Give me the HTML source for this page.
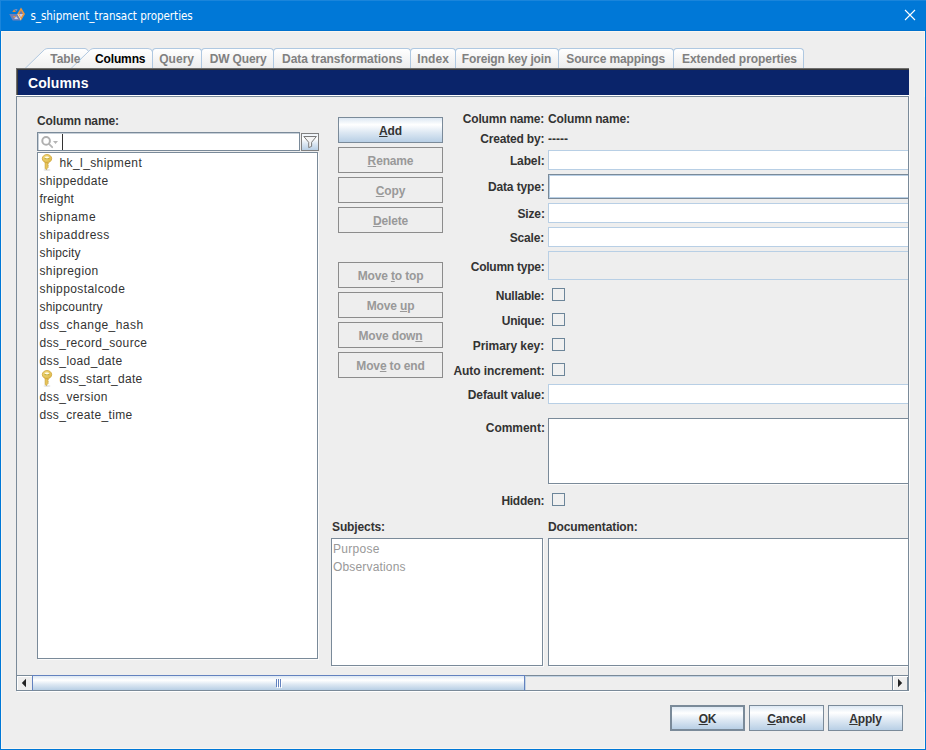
<!DOCTYPE html>
<html>
<head>
<meta charset="utf-8">
<title>s_shipment_transact properties</title>
<style>
html,body{margin:0;padding:0;}
body{width:926px;height:750px;overflow:hidden;background:#eeeeee;font-family:"Liberation Sans",Arial,sans-serif;font-size:12px;color:#222;position:relative;}
.abs{position:absolute;}
#win{position:absolute;left:0;top:0;width:924px;height:748px;border:1px solid #0078d7;background:#eeeeee;}
#title{position:absolute;left:0;top:0;width:926px;height:31px;background:#0078d7;}
#title .t{position:absolute;left:30.4px;top:9px;font-size:11.5px;line-height:15px;color:#fff;white-space:nowrap;font-family:"DejaVu Sans Condensed","DejaVu Sans","Liberation Sans",sans-serif;letter-spacing:-0.02px;}
.lbl{position:absolute;font-weight:bold;font-size:12px;line-height:14px;white-space:nowrap;color:#333;letter-spacing:-0.12px;}
.r{text-align:right;width:200.5px;}
.tab{position:absolute;top:48px;height:20px;box-sizing:border-box;border:1px solid #afc8e1;border-bottom:none;border-radius:4px 4px 0 0;background:linear-gradient(#ffffff,#ececec);font-weight:bold;color:#808080;font-size:12px;line-height:14px;text-align:center;padding-top:3px;padding-left:1px;white-space:nowrap;letter-spacing:-0.06px;}
.tab.sel{color:#000;}
.fld{position:absolute;box-sizing:border-box;background:#fff;border:1px solid #b8cfe5;}
.sp{box-shadow:1px 1px 0 #fbfbfb;}
.btn{position:absolute;box-sizing:border-box;width:105px;height:26px;border:1px solid #8c8c8c;font-weight:bold;font-size:12px;line-height:14px;text-align:center;padding-top:6px;color:#999;background:#eeeeee;letter-spacing:-0.15px;}
.btn.en{color:#333;border:1px solid #7a8a99;background:linear-gradient(#dde8f3 0%,#ffffff 28%,#dde8f3 60%,#b8cfe5 100%);}
.btn u{text-decoration:underline;}
.cb{position:absolute;box-sizing:border-box;width:13px;height:13px;border:1px solid #6c8599;background:#f0f0f0;}
.li{position:absolute;left:39.5px;font-size:12px;line-height:14px;white-space:nowrap;color:#333;letter-spacing:0.28px;}
</style>
</head>
<body>
<div id="win"></div>
<div class="abs" style="left:1px;top:31px;width:924px;height:718px;box-sizing:border-box;border:1px solid #fbf6f0;"></div>
<div id="title">
  <div class="abs" style="left:0;top:0;width:926px;height:1px;background:#1a85db"></div>
  <div class="abs" style="left:0;top:0;width:1px;height:31px;background:#1a85db"></div>
  <div class="abs" style="left:1px;top:30px;width:924px;height:1px;background:#0071cd"></div>
  <svg class="abs" style="left:8px;top:6px" width="20" height="18" viewBox="0 0 20 18">
    <polygon points="4.2,6 6.2,3.3 8,6" fill="#e38a3a"/>
    <polygon points="6.6,3.3 9.6,3.1 8.3,5.2" fill="#7f8fcc"/>
    <polygon points="1.2,8.1 9,8.1 13,14.6 4.7,14.6" fill="#6f7fb8"/>
    <polygon points="5,10 7.6,10 6.3,12.2" fill="#e8903c"/>
    <polygon points="6.2,13 8.2,10.2 10.2,13" fill="#c8cce8"/>
    <polygon points="13,1.4 17,8 13,14.6 9.2,8" fill="#e8943f"/>
    <polygon points="9.2,8 10.3,8 13,12.8 13,14.6" fill="#f8dcb8"/>
    <polygon points="13,4.6 14.9,8 11.1,8" fill="#6a7ab0"/>
    <polygon points="11.1,8 14.9,8 13,11.6" fill="#c8cce8"/>
  </svg>
  <div class="t">s_shipment_transact properties</div>
  <svg class="abs" style="left:903px;top:8px" width="14" height="14" viewBox="0 0 14 14"><path d="M2 2 L12 12 M12 2 L2 12" stroke="#fff" stroke-width="1.1" fill="none"/></svg>
</div>

<!-- tabs -->
<div id="tabs">
  <svg class="abs" style="left:20px;top:47px" width="140" height="21" viewBox="0 0 140 21">
    <defs><linearGradient id="tg" x1="0" y1="0" x2="0" y2="1"><stop offset="0" stop-color="#ffffff"/><stop offset="1" stop-color="#efefef"/></linearGradient></defs>
    <path d="M4.5 22 L24.5 2.6 Q26 1.5 28 1.5 L65 1.5 Q67 1.5 68 4 L68 22 Z" fill="url(#tg)"/>
    <path d="M4.5 22 L24.5 2.6 Q26 1.5 28 1.5 L65 1.5 Q67 1.5 68.5 4.5" fill="none" stroke="#a9c3de" stroke-width="0.9"/>
    <path d="M50.5 22 L70.5 2.6 Q72 1.5 74 1.5 L128 1.5 Q132 1.5 132.5 5 L132.5 22 Z" fill="url(#tg)"/>
    <path d="M50.5 22 L70.5 2.6 Q72 1.5 74 1.5 L128 1.5 Q132 1.5 132.5 5 L132.5 22" fill="none" stroke="#a9c3de" stroke-width="0.9"/>
  </svg>
  
  
  <div class="tab" style="left:152px;width:50px"></div>
  <div class="tab" style="left:201px;width:73px"></div>
  <div class="tab" style="left:273px;width:138px"></div>
  <div class="tab" style="left:410px;width:46px"></div>
  <div class="tab" style="left:455px;width:104px"></div>
  <div class="tab" style="left:558px;width:116px"></div>
  <div class="tab" style="left:673px;width:131px"></div>
  <div class="lbl t" style="left:50.30px;top:52px;color:#808080;letter-spacing:-0.080px">Table</div>
  <div class="lbl t" style="left:94.92px;top:52px;color:#000;letter-spacing:-0.120px">Columns</div>
  <div class="lbl t" style="left:159.22px;top:52px;color:#808080;letter-spacing:0.036px">Query</div>
  <div class="lbl t" style="left:209.66px;top:52px;color:#808080;letter-spacing:-0.144px">DW Query</div>
  <div class="lbl t" style="left:282.04px;top:52px;color:#808080;letter-spacing:-0.019px">Data transformations</div>
  <div class="lbl t" style="left:417.22px;top:52px;color:#808080;letter-spacing:0.076px">Index</div>
  <div class="lbl t" style="left:461.84px;top:52px;color:#808080;letter-spacing:-0.175px">Foreign key join</div>
  <div class="lbl t" style="left:566.28px;top:52px;color:#808080;letter-spacing:-0.126px">Source mappings</div>
  <div class="lbl t" style="left:682.04px;top:52px;color:#808080;letter-spacing:-0.058px">Extended properties</div>
</div>

<!-- panel -->
<div class="abs" style="left:16px;top:96px;width:893px;height:595px;box-sizing:border-box;border-left:1px solid #7a8a99;border-right:1px solid #7a8a99;border-top:1px solid #7a8a99;"></div>
<div class="abs" style="left:16px;top:68px;width:893px;height:27px;background:#0a246a;box-sizing:border-box;border-top:1px solid #6e6e6e;border-left:1px solid #6e6e6e;"></div>
<div class="abs" style="left:17px;top:69px;width:892px;height:1px;background:#3a3a3a;"></div>
<div class="abs" style="left:17px;top:69px;width:1px;height:26px;background:#3a3a3a;"></div>
<div class="abs" style="left:16px;top:95px;width:893px;height:1px;background:#ffffff;"></div>
<div class="abs" style="left:28px;top:75px;font-weight:bold;font-size:14px;line-height:16px;color:#fff;white-space:nowrap;letter-spacing:0.1px">Columns</div>

<!-- left column -->
<div class="lbl" style="left:37px;top:114px">Column name:</div>
<div class="fld" style="left:37px;top:132px;width:263px;height:19px;border:1px solid #7a8a99;box-shadow:inset 1px 1px 0 #c7d0d9;"></div>
<svg class="abs" style="left:40px;top:134px" width="20" height="16" viewBox="0 0 20 16">
  <circle cx="6.1" cy="6.9" r="3.8" fill="none" stroke="#b0b0b0" stroke-width="2"/>
  <path d="M8.9 9.9 L12.2 13.2" stroke="#b4b4b4" stroke-width="1.8" stroke-linecap="round"/>
  <path d="M13 7 L18 7 L15.5 10 Z" fill="#b4b4b4"/>
</svg>
<div class="abs" style="left:62px;top:134px;width:1px;height:16px;background:#333"></div>
<div class="abs" style="left:301px;top:133px;width:18px;height:18px;box-sizing:border-box;border:1px solid #808080;background:linear-gradient(#eef3f9 0%,#ffffff 30%,#dde8f3 60%,#b8cfe5 100%);"></div>
<svg class="abs" style="left:301px;top:133px" width="18" height="18" viewBox="0 0 18 18"><path d="M2.8 3.5 L15.4 3.5 L10.6 9.3 L10.6 13.4 L7.7 14.6 L7.7 9.3 Z" fill="#f4f4f4" stroke="#7a7a7a" stroke-width="1"/></svg>

<div class="fld sp" style="left:37px;top:152px;width:281px;height:507px;border:1px solid #7a8a99;"></div>
<div id="list">
<svg class="abs" style="left:40px;top:153px" width="14" height="18" viewBox="0 0 14 18">
  <defs><radialGradient id="kg153" cx="0.4" cy="0.35" r="0.7"><stop offset="0" stop-color="#f6e08a"/><stop offset="1" stop-color="#dcb544"/></radialGradient></defs>
  <ellipse cx="7" cy="17" rx="3.4" ry="0.9" fill="#d8d8d8" opacity="0.7"/>
  <path d="M5.1 8 L7 8 L7 9.6 L8.6 10.4 L7.3 11.2 L8.6 12.2 L7.3 13 L8.6 14 L7.4 14.8 L6.4 16.7 L5.1 15.4 Z" fill="#e8c458" stroke="#c09a30" stroke-width="0.6"/>
  <ellipse cx="7" cy="5.6" rx="4.7" ry="4.1" fill="url(#kg153)" stroke="#cfa63a" stroke-width="0.8"/>
  <rect x="4.6" y="5" width="4.8" height="1.2" fill="#b6a024"/>
  <ellipse cx="7" cy="4.5" rx="2" ry="0.9" fill="#fffdf0"/>
</svg>
<div class="li" style="left:59.5px;top:156px;letter-spacing:0.404px">hk_l_shipment</div>
<div class="li" style="top:174px;letter-spacing:0.318px">shippeddate</div>
<div class="li" style="top:192px;letter-spacing:0.166px">freight</div>
<div class="li" style="top:210px;letter-spacing:0.580px">shipname</div>
<div class="li" style="top:228px;letter-spacing:0.515px">shipaddress</div>
<div class="li" style="top:246px;letter-spacing:0.130px">shipcity</div>
<div class="li" style="top:264px;letter-spacing:0.360px">shipregion</div>
<div class="li" style="top:282px;letter-spacing:0.409px">shippostalcode</div>
<div class="li" style="top:300px;letter-spacing:0.170px">shipcountry</div>
<div class="li" style="top:318px;letter-spacing:0.439px">dss_change_hash</div>
<div class="li" style="top:336px;letter-spacing:0.339px">dss_record_source</div>
<div class="li" style="top:354px;letter-spacing:0.387px">dss_load_date</div>
<svg class="abs" style="left:40px;top:369px" width="14" height="18" viewBox="0 0 14 18">
  <defs><radialGradient id="kg369" cx="0.4" cy="0.35" r="0.7"><stop offset="0" stop-color="#f6e08a"/><stop offset="1" stop-color="#dcb544"/></radialGradient></defs>
  <ellipse cx="7" cy="17" rx="3.4" ry="0.9" fill="#d8d8d8" opacity="0.7"/>
  <path d="M5.1 8 L7 8 L7 9.6 L8.6 10.4 L7.3 11.2 L8.6 12.2 L7.3 13 L8.6 14 L7.4 14.8 L6.4 16.7 L5.1 15.4 Z" fill="#e8c458" stroke="#c09a30" stroke-width="0.6"/>
  <ellipse cx="7" cy="5.6" rx="4.7" ry="4.1" fill="url(#kg369)" stroke="#cfa63a" stroke-width="0.8"/>
  <rect x="4.6" y="5" width="4.8" height="1.2" fill="#b6a024"/>
  <ellipse cx="7" cy="4.5" rx="2" ry="0.9" fill="#fffdf0"/>
</svg>
<div class="li" style="left:59.5px;top:372px;letter-spacing:0.308px">dss_start_date</div>
<div class="li" style="top:390px;letter-spacing:0.390px">dss_version</div>
<div class="li" style="top:408px;letter-spacing:0.334px">dss_create_time</div>
</div>

<!-- buttons -->
<div class="btn en" style="left:338px;top:117px"><u>A</u>dd</div>
<div class="btn" style="left:338px;top:147px"><u>R</u>ename</div>
<div class="btn" style="left:338px;top:177px"><u>C</u>opy</div>
<div class="btn" style="left:338px;top:207px"><u>D</u>elete</div>
<div class="btn" style="left:338px;top:262px">Move <u>t</u>o top</div>
<div class="btn" style="left:338px;top:292px">Move <u>u</u>p</div>
<div class="btn" style="left:338px;top:322px">Move dow<u>n</u></div>
<div class="btn" style="left:338px;top:352px">Mov<u>e</u> to end</div>

<!-- form -->
<div class="lbl f" style="left:462.72px;top:112px;letter-spacing:-0.155px">Column name:</div>
<div class="lbl" style="left:548px;top:112px">Column name:</div>
<div class="lbl f" style="left:480.16px;top:132px;letter-spacing:-0.172px">Created by:</div>
<div class="lbl" style="left:548px;top:132px;letter-spacing:0">-----</div>
<div class="lbl f" style="left:509.90px;top:154px;letter-spacing:-0.120px">Label:</div>
<div class="fld" style="left:548px;top:150px;width:361px;height:20px"></div>
<div class="lbl f" style="left:487.90px;top:180px;letter-spacing:-0.120px">Data type:</div>
<div class="fld" style="left:548px;top:174px;width:361px;height:25px;border:1px solid #7a8a99;box-shadow:inset 1px 1px 0 #b8cfe5,inset 0 -1px 0 #b8cfe5;"></div>
<div class="lbl f" style="left:517.40px;top:207px;letter-spacing:-0.120px">Size:</div>
<div class="fld" style="left:548px;top:203px;width:361px;height:20px"></div>
<div class="lbl f" style="left:509.78px;top:231px;letter-spacing:-0.168px">Scale:</div>
<div class="fld" style="left:548px;top:227px;width:361px;height:20px"></div>
<div class="lbl f" style="left:470.72px;top:260px;letter-spacing:-0.238px">Column type:</div>
<div class="fld" style="left:548px;top:251px;width:361px;height:29px;background:#eeeeee"></div>
<div class="lbl f" style="left:495.84px;top:289px;letter-spacing:-0.246px">Nullable:</div>
<div class="cb" style="left:552px;top:288px"></div>
<div class="lbl f" style="left:501.84px;top:314px;letter-spacing:-0.283px">Unique:</div>
<div class="cb" style="left:552px;top:313px"></div>
<div class="lbl f" style="left:472.78px;top:339px;letter-spacing:-0.061px">Primary key:</div>
<div class="cb" style="left:552px;top:338px"></div>
<div class="lbl f" style="left:453.40px;top:364px;letter-spacing:-0.053px">Auto increment:</div>
<div class="cb" style="left:552px;top:363px"></div>
<div class="lbl f" style="left:467.84px;top:388px;letter-spacing:-0.130px">Default value:</div>
<div class="fld" style="left:548px;top:384px;width:361px;height:20px"></div>
<div class="lbl f" style="left:485.78px;top:421px;letter-spacing:-0.031px">Comment:</div>
<div class="fld sp" style="left:548px;top:418px;width:361px;height:66px;border:1px solid #7a8a99"></div>
<div class="lbl f" style="left:501.40px;top:494px;letter-spacing:-0.263px">Hidden:</div>
<div class="cb" style="left:552px;top:493px"></div>

<div class="lbl" style="left:332px;top:520px">Subjects:</div>
<div class="fld sp" style="left:331px;top:538px;width:212px;height:128px;border:1px solid #7a8a99;background:#fff"></div>
<div class="li" style="left:333px;top:542px;color:#999;letter-spacing:0.3px">Purpose</div>
<div class="li" style="left:333px;top:560px;color:#999;letter-spacing:0.16px">Observations</div>
<div class="lbl" style="left:548px;top:520px">Documentation:</div>
<div class="fld sp" style="left:548px;top:538px;width:361px;height:128px;border:1px solid #7a8a99"></div>

<!-- cover right overflow -->
<div class="abs" style="left:909px;top:97px;width:16px;height:595px;background:#eeeeee"></div>
<div class="abs" style="left:908px;top:97px;width:1px;height:594px;background:#7a8a99"></div>
<div class="abs" style="left:909px;top:96px;width:1px;height:596px;background:#fafafa"></div>

<!-- scrollbar -->
<div class="abs" style="left:17px;top:675px;width:891px;height:16px;box-sizing:border-box;border-top:1px solid #7a8a99;border-bottom:1px solid #7a8a99;background:#eeeeee"></div>
<div class="abs" style="left:17px;top:691px;width:892px;height:1px;background:#ffffff"></div>
<div class="abs" style="left:17px;top:676px;width:15px;height:1px;background:#ffffff"></div>
<div class="abs" style="left:17px;top:676px;width:1px;height:14px;background:#ffffff"></div>
<div class="abs" style="left:525px;top:676px;width:367px;height:1px;background:#c3d3e3"></div>
<div class="abs" style="left:525px;top:676px;width:1px;height:14px;background:#c3d3e3"></div>
<div class="abs" style="left:32px;top:675px;width:493px;height:16px;box-sizing:border-box;border:1px solid #6382bf;border-bottom-color:#7a8a99;background:linear-gradient(#dde8f3 0%,#ffffff 30%,#dde8f3 60%,#b8cfe5 100%)"></div>
<div class="abs" style="left:892px;top:676px;width:1px;height:14px;background:#7a8a99"></div>
<div class="abs" style="left:907px;top:676px;width:1px;height:14px;background:#7a8a99"></div>
<div class="abs" style="left:893px;top:676px;width:15px;height:1px;background:#ffffff"></div>
<div class="abs" style="left:893px;top:676px;width:1px;height:14px;background:#ffffff"></div>
<svg class="abs" style="left:16px;top:675px" width="17" height="16" viewBox="0 0 17 16"><path d="M10 3.8 L10 12.2 L5.8 8 Z" fill="#222"/></svg>
<svg class="abs" style="left:892px;top:675px" width="17" height="16" viewBox="0 0 17 16"><path d="M6 3.8 L6 12.2 L10.2 8 Z" fill="#222"/></svg>
<svg class="abs" style="left:276px;top:679px" width="7" height="10" viewBox="0 0 7 10"><path d="M1.5 1 V9 M3.5 1 V9 M5.5 1 V9" stroke="#ffffff" stroke-width="1"/><path d="M0.5 0 V8 M2.5 0 V8 M4.5 0 V8" stroke="#6382bf" stroke-width="1"/></svg>

<!-- bottom buttons -->
<div class="btn en" style="left:670px;top:705px;width:75px;height:26px;border:2px solid #7a8a99;padding-top:5px"><u>O</u>K</div>
<div class="btn en" style="left:749px;top:705px;width:75px;height:26px"><u>C</u>ancel</div>
<div class="btn en" style="left:828px;top:705px;width:75px;height:26px"><u>A</u>pply</div>
</body>
</html>
